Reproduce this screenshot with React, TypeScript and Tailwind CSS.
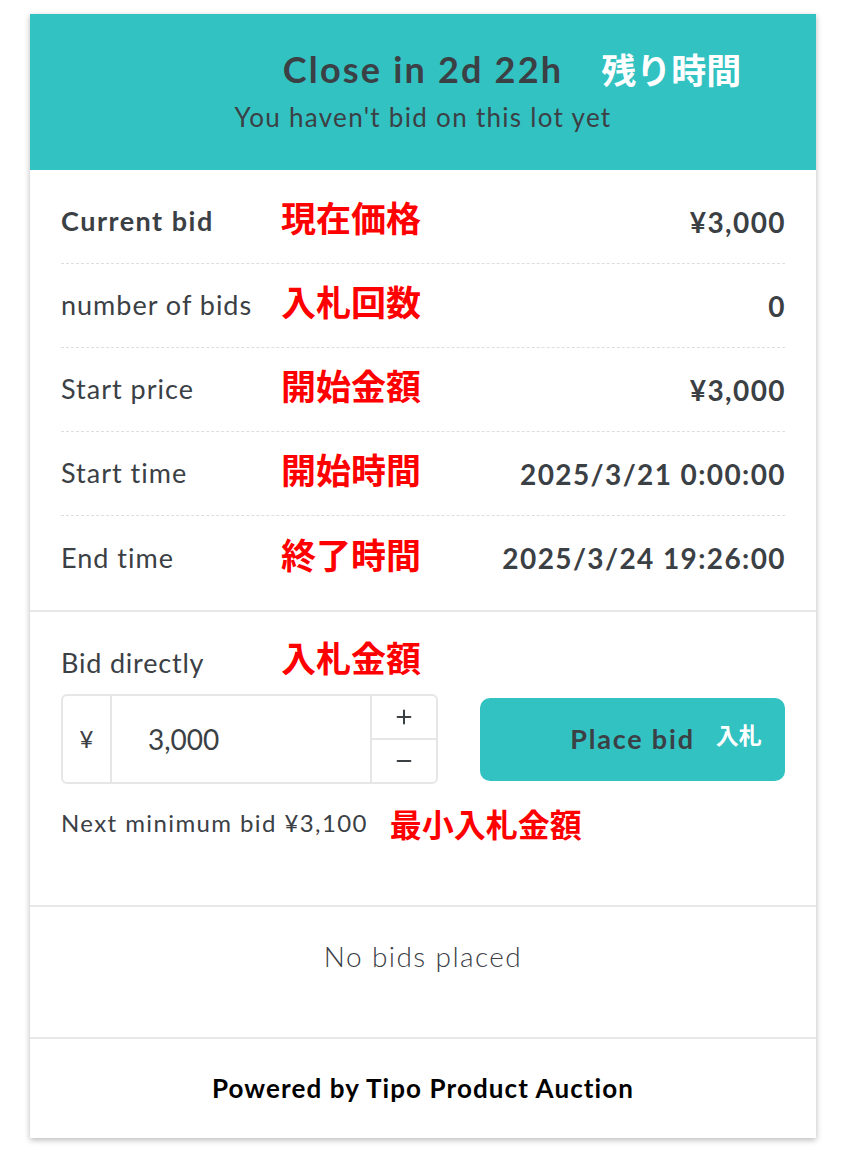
import { Plus, Minus } from 'lucide-react';

const font = { fontFamily: '"Lato", "Noto Sans CJK JP", sans-serif' };
const jp = { fontFamily: '"Noto Sans CJK JP", sans-serif' };

interface Row {
  label: string;
  note: string;
  value: string;
  strong?: boolean;
}

const rows: Row[] = [
  { label: 'Current bid', note: '現在価格', value: '¥3,000', strong: true },
  { label: 'number of bids', note: '入札回数', value: '0' },
  { label: 'Start price', note: '開始金額', value: '¥3,000' },
  { label: 'Start time', note: '開始時間', value: '2025/3/21 0:00:00' },
  { label: 'End time', note: '終了時間', value: '2025/3/24 19:26:00' },
];

// 赤字の注釈
const Note = ({ children, className = '' }: { children: React.ReactNode; className?: string }) => (
  <span className={`font-bold text-[#ff0000] leading-none ${className}`} style={jp}>
    {children}
  </span>
);

export default function App() {
  return (
    <div className="min-h-[1169px] bg-white pt-[14px]" style={font}>
      <div className="mx-[30px] w-[786px] bg-white shadow-[0_2px_6px_rgba(0,0,0,0.28)] text-[#3b4045]">
        {/* header */}
        <div className="h-[156px] bg-[#33c2c2] flex flex-col items-center pt-[32px]">
          <div className="relative">
            <h1 className="text-[36px] font-bold leading-[46px] tracking-[2.2px]">Close in 2d 22h</h1>
            <span
              className="absolute left-full top-0 ml-[38px] whitespace-nowrap text-white font-bold text-[35px] leading-[46px]"
              style={jp}
            >
              残り時間
            </span>
          </div>
          <p className="mt-[7px] text-[26px] leading-[36px] tracking-[1.3px]">You haven't bid on this lot yet</p>
        </div>

        {/* info rows */}
        <div className="px-[31px] py-[10px] border-b-2 border-[#e8e8e8]">
          {rows.map((r, i) => (
            <div
              key={r.label}
              className={`h-[84px] flex items-center ${i < rows.length - 1 ? 'border-b border-dashed border-[#dedede]' : ''}`}
            >
              <span
                className={`w-[220px] text-[27px] ${r.strong ? 'font-bold tracking-[1.5px]' : 'font-normal tracking-[1px]'}`}
              >
                {r.label}
              </span>
              <Note className="text-[35px] -mt-[10px]">{r.note}</Note>
              <span className="ml-auto text-[28px] font-bold tracking-[1.4px] -mr-[1px]">{r.value}</span>
            </div>
          ))}
        </div>

        {/* bid form */}
        <div className="px-[31px] pt-[33px] pb-[66px] border-b-2 border-[#e8e8e8]">
          <div className="flex items-center h-[36px]">
            <span className="w-[220px] text-[27px] tracking-[0.8px]">Bid directly</span>
            <Note className="text-[35px] -mt-[14px]">入札金額</Note>
          </div>
          <div className="mt-[13px] flex items-center gap-[42px]">
            <div className="w-[377px] h-[90px] flex border-2 border-[#e6e6e6] rounded-[6px]">
              <div className="w-[49px] flex items-center justify-center border-r-2 border-[#e6e6e6] text-[24px]">¥</div>
              <div className="flex-1 flex items-center pl-[36px] text-[28px]">3,000</div>
              <div className="w-[66px] flex flex-col border-l-2 border-[#e6e6e6]">
                <div className="flex-1 flex items-center justify-center border-b-2 border-[#e6e6e6]">
                  <Plus size={22} strokeWidth={2.2} />
                </div>
                <div className="flex-1 flex items-center justify-center">
                  <Minus size={22} strokeWidth={2.2} />
                </div>
              </div>
            </div>
            <button className="flex-1 h-[83px] rounded-[10px] bg-[#33c2c2] flex items-center justify-center">
              <span className="relative text-[27px] font-bold tracking-[1.8px]">
                Place bid
                <span
                  className="absolute left-full top-[-2px] ml-[21px] whitespace-nowrap text-white text-[23px] font-bold tracking-normal"
                  style={jp}
                >
                  入札
                </span>
              </span>
            </button>
          </div>
          <div className="mt-[23px] flex items-center h-[32px]">
            <span className="text-[24px] tracking-[1.4px] mr-[22px]">Next minimum bid ¥3,100</span>
            <Note className="text-[32px]">最小入札金額</Note>
          </div>
        </div>

        {/* history */}
        <div className="h-[132px] border-b-2 border-[#e8e8e8] flex justify-center pt-[31px]">
          <span className="text-[28px] font-light leading-[36px] tracking-[1.4px]">No bids placed</span>
        </div>

        {/* footer */}
        <div className="h-[99px] flex items-center justify-center">
          <span className="text-[26px] font-bold text-black tracking-[1.1px]">Powered by Tipo Product Auction</span>
        </div>
      </div>
    </div>
  );
}
